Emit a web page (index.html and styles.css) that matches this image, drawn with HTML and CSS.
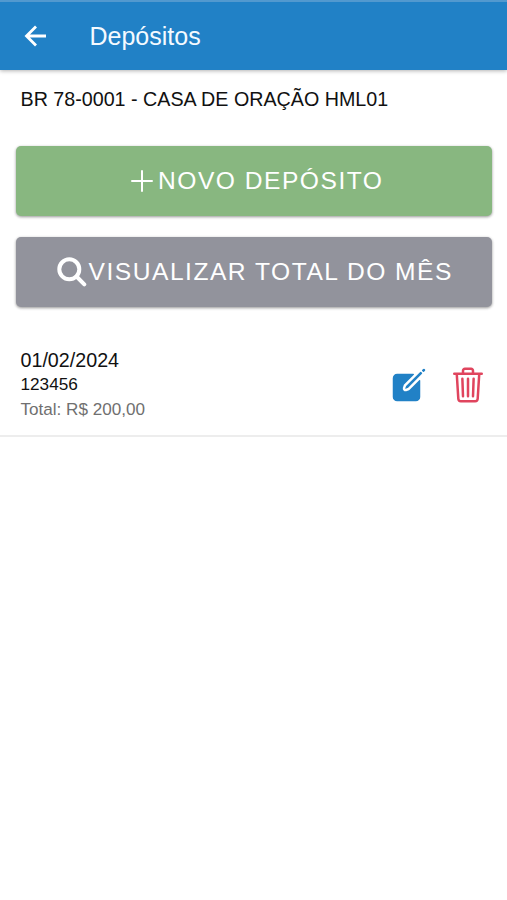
FILE: index.html
```html
<!DOCTYPE html>
<html lang="pt-BR">
<head>
  <meta charset="UTF-8" />
  <meta name="viewport" content="width=device-width, initial-scale=1.0"/>
  <title>Depósitos</title>
  <link rel="stylesheet" href="styles.css">
</head>
<body>

<header class="toolbar">
  <svg class="back-icon" viewBox="0 0 24 24" width="24" height="24">
    <path d="M22 12H3M12 2.5L2.5 12L12 21.5" />
  </svg>
  <h1 class="title">Depósitos</h1>
</header>

<main>
  <p class="church">BR 78-0001 - CASA DE ORAÇÃO HML01</p>

  <div class="buttons">
    <button class="button button-new">
      <svg class="add-icon" viewBox="0 0 22 22" width="22" height="22">
        <path d="M11 1V21M1 11H21" />
      </svg>
      <span>NOVO DEPÓSITO</span>
    </button>
    <button class="button button-total">
      <svg class="search-icon" viewBox="0 0 30 30" width="30" height="30">
        <circle cx="12.3" cy="12.3" r="10" />
        <path d="M19.5 19.5L27.3 27.3" />
      </svg>
      <span>VISUALIZAR TOTAL DO MÊS</span>
    </button>
  </div>

  <div class="item">
    <div class="item-label">
      <h2>01/02/2024</h2>
      <h3>123456</h3>
      <p>Total: R$ 200,00</p>
    </div>
    <svg class="edit-icon" viewBox="0 0 512 512" width="40" height="40">
      <path d="M459.94 53.25a16.06 16.06 0 00-23.22-.56L424.35 65a8 8 0 000 11.31l11.34 11.32a8 8 0 0011.34 0l12.06-12c6.1-6.09 6.67-16.01.85-22.38zM399.34 90L218.82 270.2a9 9 0 00-2.31 3.93L208.16 299a3.91 3.91 0 004.86 4.86l24.85-8.35a9 9 0 003.93-2.31L422 112.66a9 9 0 000-12.66l-9.95-10a9 9 0 00-12.71 0z" />
      <path d="M386.34 193.66L264.45 315.79A41.08 41.08 0 01247.58 326l-25.9 8.67a35.92 35.92 0 01-44.33-44.33l8.67-25.9a41.08 41.08 0 0110.19-16.87L318.34 125.66A8 8 0 00312.69 112H104a56 56 0 00-56 56v240a56 56 0 0056 56h240a56 56 0 0056-56V199.31a8 8 0 00-13.66-5.65z" />
    </svg>
    <svg class="trash-icon" viewBox="0 0 512 512" width="40" height="40">
      <path d="M112 112l20 320c.95 18.49 14.4 32 32 32h184c17.67 0 30.87-13.51 32-32l20-320M80 112h352" />
      <path d="M192 112V72a23.93 23.93 0 0124-24h80a23.93 23.93 0 0124 24v40M256 176v224M184 176l8 224M328 176l-8 224" />
    </svg>
  </div>
</main>

</body>
</html>
```

FILE: styles.css
```css
body {
  font-family: "Liberation Sans", Arial, sans-serif;
  margin: 0;
  background: #fff;
  color: #111;
}

h1, h2, h3, p {
  margin: 0;
  font-weight: normal;
}

svg {
  flex-shrink: 0;
  fill: none;
  stroke-linecap: round;
  stroke-linejoin: round;
}

.toolbar {
  display: flex;
  align-items: center;
  box-sizing: border-box;
  height: 70px;
  padding: 0 24px 1px;
  background: #2181c6;
  border-top: 2px solid #5299cf;
  box-shadow: 0 1px 4px rgba(0,0,0,0.3);
}

.back-icon {
  stroke: white;
  stroke-width: 2.8;
  stroke-linecap: butt;
  stroke-linejoin: miter;
}

.title {
  margin-left: 41.5px;
  color: #f4faff;
  font-size: 25px;
  line-height: 30px;
}

.church {
  padding: 17px 20.5px 0;
  font-size: 19.7px;
  line-height: 24px;
}

.buttons {
  display: flex;
  flex-direction: column;
  gap: 21.5px;
  padding: 35px 15px 0 15.5px;
}

.button {
  display: flex;
  justify-content: center;
  align-items: center;
  height: 69.5px;
  padding: 0;
  border: none;
  border-radius: 5px;
  color: white;
  font-family: inherit;
  font-size: 24.6px;
  letter-spacing: 1.5px;
  box-shadow: 0 1px 3px rgba(0,0,0,0.3), 0 1px 3px rgba(0,0,0,0.14);
}

.button-new {
  background: #88b780;
  gap: 5px;
}

.button-total {
  background: #92939c;
  gap: 2px;
}

.add-icon {
  margin-left: 7px;
  stroke: white;
  stroke-width: 2;
}

.search-icon {
  margin-left: 2px;
  stroke: white;
  stroke-width: 4;
}

.item {
  display: flex;
  align-items: center;
  box-sizing: border-box;
  height: 97px;
  margin-top: 33.5px;
  padding: 0 19px 6px 20.5px;
  border-bottom: 2px solid #ededed;
}

.item-label {
  flex-grow: 1;
}

.item-label h2 {
  font-size: 19.7px;
  line-height: 24px;
}

.item-label h3 {
  font-size: 17.2px;
  line-height: 25px;
}

.item-label p {
  color: #707070;
  font-size: 17.1px;
  line-height: 25px;
}

.edit-icon {
  margin-right: 19px;
  fill: #2181c6;
}

.trash-icon {
  stroke: #e0455e;
  stroke-width: 32;
}
```
